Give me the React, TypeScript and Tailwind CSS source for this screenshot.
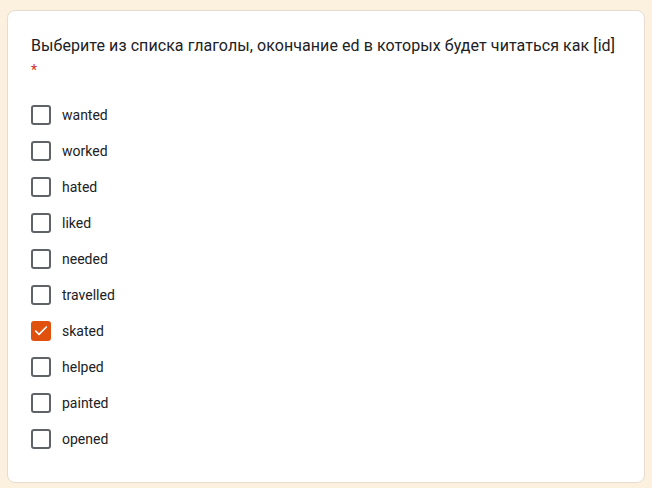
import { Check } from 'lucide-react';

const options = [
  { label: 'wanted', checked: false },
  { label: 'worked', checked: false },
  { label: 'hated', checked: false },
  { label: 'liked', checked: false },
  { label: 'needed', checked: false },
  { label: 'travelled', checked: false },
  { label: 'skated', checked: true },
  { label: 'helped', checked: false },
  { label: 'painted', checked: false },
  { label: 'opened', checked: false },
];

export default function App() {
  return (
    <div className="min-h-[488px] w-[652px] bg-[#fcf0df] px-[7px] pt-[10px] pb-[6px]">
      <div className="rounded-lg border border-[#e6ddd0] bg-white px-[23px] pt-[23px] pb-[25px]">
        <div className="text-[16px] leading-6 tracking-[0.07px] text-[#202124]" style={{ fontFamily: 'Roboto, sans-serif' }}>
          Выберите из списка глаголы, окончание ed в которых будет читаться как [id]
        </div>
        <div className="text-[14px] leading-6 text-[#d93025]" style={{ fontFamily: 'Roboto, sans-serif' }}>*</div>
        <div className="mt-[15px] flex flex-col" style={{ fontFamily: 'Roboto, sans-serif' }}>
          {options.map((o) => (
            <label key={o.label} className="flex h-9 items-center gap-[11px]">
              {o.checked ? (
                <span className="flex h-5 w-5 items-center justify-center rounded-[3px] bg-[#e0510d]">
                  <Check className="h-4 w-4 text-white" strokeWidth={2.5} />
                </span>
              ) : (
                <span className="h-5 w-5 rounded-[3px] border-2 border-[#5f6368]" />
              )}
              <span className="text-[14px] text-[#202124]">{o.label}</span>
            </label>
          ))}
        </div>
      </div>
    </div>
  );
}
